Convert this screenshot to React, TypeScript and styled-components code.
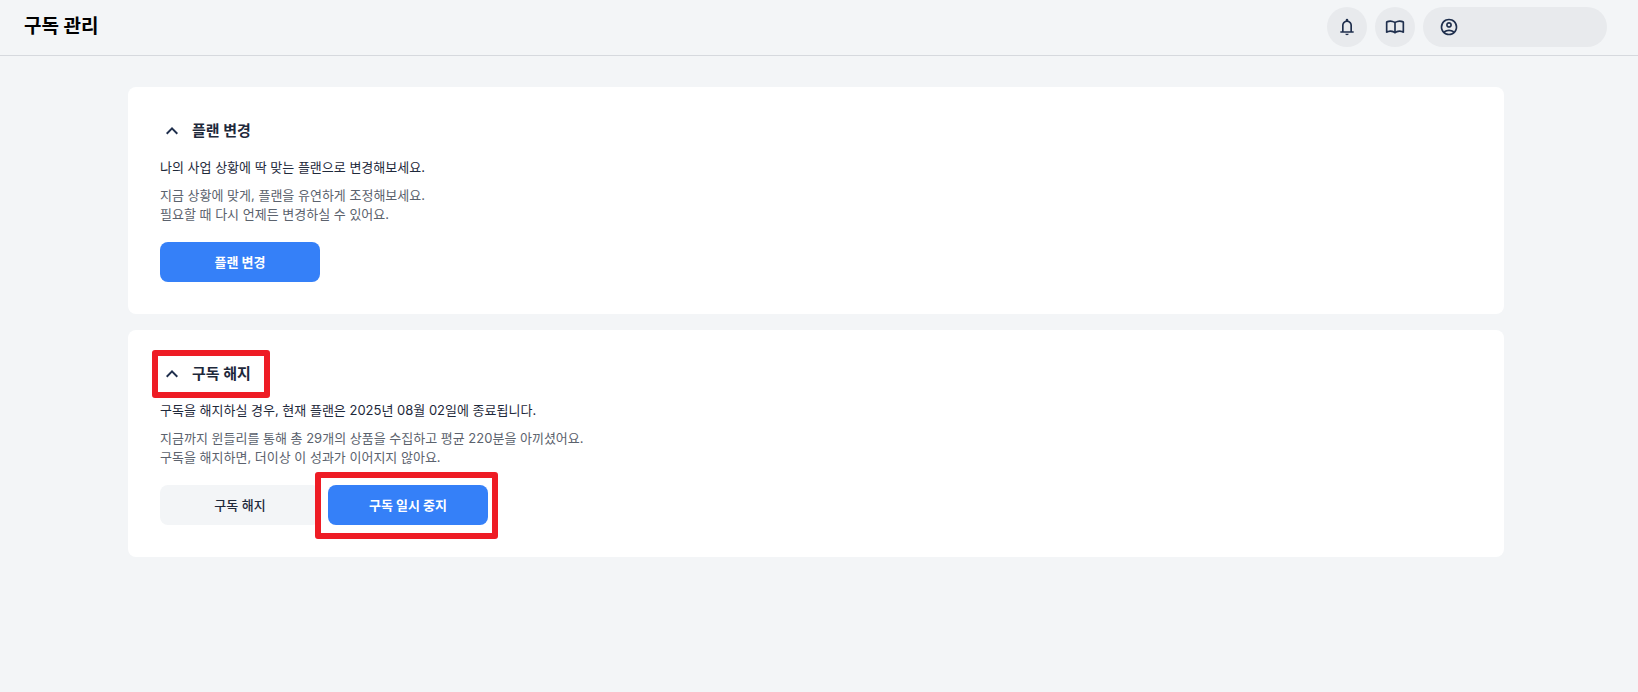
import React, { useState } from "react";
import styled, { createGlobalStyle, css } from "styled-components";

const GlobalStyle = createGlobalStyle`
  *, *::before, *::after { box-sizing: border-box; }
  body {
    margin: 0;
    background: #f3f5f7;
    color: #1e293b;
    font-family: Inter, "Noto Sans CJK KR", sans-serif;
    font-size: 13px;
    line-height: 19px;
  }
  button { font: inherit; color: inherit; cursor: pointer; }
`;

const Header = styled.header`
  display: flex;
  align-items: center;
  justify-content: space-between;
  height: 56px;
  padding: 0 31px 2px 24px;
  border-bottom: 1px solid #d6d9de;
`;

const PageTitle = styled.h1`
  margin: 0;
  color: #000;
  font-size: 19px;
  line-height: 24px;
  font-weight: 700;
`;

const HeaderActions = styled.nav`
  display: flex;
  gap: 8px;
`;

const HeaderButton = styled.button<{ $wide?: boolean }>`
  display: flex;
  align-items: center;
  justify-content: ${(p) => (p.$wide ? "flex-start" : "center")};
  width: ${(p) => (p.$wide ? "184px" : "40px")};
  height: 40px;
  padding: 0 ${(p) => (p.$wide ? "16px" : "0")};
  border: 0;
  border-radius: 20px;
  background: #e8eaed;
`;

const Icon = styled.svg<{ $size: number }>`
  display: block;
  flex: none;
  width: ${(p) => p.$size}px;
  height: ${(p) => p.$size}px;
  fill: #1f2f4d;
`;

const Content = styled.main`
  display: flex;
  flex-direction: column;
  gap: 16px;
  padding: 31px 134px 31px 128px;
`;

const Card = styled.section`
  padding: 32px;
  border-radius: 8px;
  background: #fff;
`;

const CardHeading = styled.h2`
  display: flex;
  margin: 0;
  font-size: 15px;
  line-height: 24px;
  font-weight: 700;
`;

const Toggle = styled.button`
  display: flex;
  align-items: center;
  gap: 8px;
  height: 24px;
  padding: 0;
  border: 0;
  background: none;
`;

const Chevron = styled(Icon)<{ $open: boolean }>`
  ${(p) => !p.$open && css`transform: rotate(180deg);`}
`;

const Lead = styled.p`
  margin: 15px 0 9px;
`;

const Description = styled.p`
  margin: 0;
  color: #5b626d;
`;

const Actions = styled.div`
  display: flex;
  gap: 8px;
  margin-top: 18px;
`;

const ActionButton = styled.button<{ $primary?: boolean }>`
  width: 160px;
  height: 40px;
  padding: 0;
  border: 0;
  border-radius: 8px;
  background: ${(p) => (p.$primary ? "#3580f8" : "#f3f5f7")};
  color: ${(p) => (p.$primary ? "#fff" : "#1e293b")};
  font-weight: ${(p) => (p.$primary ? 700 : 500)};
`;

const Marked = styled.span<{ $inset: string }>`
  position: relative;
  display: flex;

  &::after {
    content: "";
    position: absolute;
    inset: ${(p) => p.$inset};
    border: 6px solid #ee1c25;
    border-radius: 3px;
    pointer-events: none;
  }
`;

const paths = {
  bell: "M160-200v-80h80v-280q0-83 50-147.5T420-792v-28q0-25 17.5-42.5T480-880q25 0 42.5 17.5T540-820v28q80 20 130 84.5T720-560v280h80v80H160Zm320-300Zm0 420q-33 0-56.5-23.5T400-160h160q0 33-23.5 56.5T480-80ZM320-280h320v-280q0-66-47-113t-113-47q-66 0-113 47t-47 113v280Z",
  book: "M260-320q47 0 91.5 10.5T440-278v-394q-41-24-87-36t-93-12q-36 0-71.5 7T120-692v396q35-12 69.5-18t70.5-6Zm260 42q44-21 88.5-31.5T700-320q36 0 70.5 6t69.5 18v-396q-33-14-68.5-21t-71.5-7q-47 0-93 12t-87 36v394Zm-40 118q-48-38-104-59t-116-21q-42 0-82.5 11T100-198q-21 11-40.5-1T40-234v-482q0-11 5.5-21T62-752q46-24 96-36t102-12q58 0 113.5 15T480-740q51-30 106.5-45T700-800q52 0 102 12t96 36q11 5 16.5 15t5.5 21v482q0 23-19.5 35t-40.5 1q-37-20-77.5-31T700-240q-60 0-116 21t-104 59Z",
  account:
    "M234-276q51-39 114-61.5T480-360q69 0 132 22.5T726-276q35-41 54.5-93T800-480q0-133-93.5-226.5T480-800q-133 0-226.5 93.5T160-480q0 59 19.5 111t54.5 93Zm246-164q-59 0-99.5-40.5T340-580q0-59 40.5-99.5T480-720q59 0 99.5 40.5T620-580q0 59-40.5 99.5T480-440Zm0 360q-83 0-156-31.5T197-197q-54-54-85.5-127T80-480q0-83 31.5-156T197-763q54-54 127-85.5T480-880q83 0 156 31.5T763-763q54 54 85.5 127T880-480q0 83-31.5 156T763-197q-54 54-127 85.5T480-80Zm0-80q53 0 100-15.5t86-44.5q-39-29-86-44.5T480-280q-53 0-100 15.5T294-220q39 29 86 44.5T480-160Zm0-360q26 0 43-17t17-43q0-26-17-43t-43-17q-26 0-43 17t-17 43q0 26 17 43t43 17Z",
  chevron: "M480-528 296-344l-56-56 240-240 240 240-56 56-184-184Z",
};

function HeaderIcon({ name }: { name: "bell" | "book" | "account" }) {
  return (
    <Icon $size={20} viewBox="0 -960 960 960" aria-hidden="true">
      <path d={paths[name]} />
    </Icon>
  );
}

interface PlanSectionProps {
  title: string;
  lead: string;
  lines: [string, string];
  marked?: boolean;
  children: React.ReactNode;
}

function PlanSection({ title, lead, lines, marked, children }: PlanSectionProps) {
  const [open, setOpen] = useState(true);
  const toggle = (
    <Toggle type="button" aria-expanded={open} onClick={() => setOpen(!open)}>
      <Chevron $size={24} $open={open} viewBox="0 -960 960 960" aria-hidden="true">
        <path d={paths.chevron} />
      </Chevron>
      {title}
    </Toggle>
  );
  return (
    <Card>
      <CardHeading>
        {marked ? <Marked $inset="-12px -19px -12px -8px">{toggle}</Marked> : toggle}
      </CardHeading>
      {open && (
        <>
          <Lead>{lead}</Lead>
          <Description>
            {lines[0]}
            <br />
            {lines[1]}
          </Description>
          <Actions>{children}</Actions>
        </>
      )}
    </Card>
  );
}

export default function App() {
  return (
    <>
      <GlobalStyle />
      <Header>
        <PageTitle>구독 관리</PageTitle>
        <HeaderActions>
          <HeaderButton type="button" aria-label="알림">
            <HeaderIcon name="bell" />
          </HeaderButton>
          <HeaderButton type="button" aria-label="가이드">
            <HeaderIcon name="book" />
          </HeaderButton>
          <HeaderButton type="button" $wide aria-label="내 계정">
            <HeaderIcon name="account" />
          </HeaderButton>
        </HeaderActions>
      </Header>
      <Content>
        <PlanSection
          title="플랜 변경"
          lead="나의 사업 상황에 딱 맞는 플랜으로 변경해보세요."
          lines={[
            "지금 상황에 맞게, 플랜을 유연하게 조정해보세요.",
            "필요할 때 다시 언제든 변경하실 수 있어요.",
          ]}
        >
          <ActionButton type="button" $primary>
            플랜 변경
          </ActionButton>
        </PlanSection>
        <PlanSection
          title="구독 해지"
          lead="구독을 해지하실 경우, 현재 플랜은 2025년 08월 02일에 종료됩니다."
          lines={[
            "지금까지 윈들리를 통해 총 29개의 상품을 수집하고 평균 220분을 아끼셨어요.",
            "구독을 해지하면, 더이상 이 성과가 이어지지 않아요.",
          ]}
          marked
        >
          <ActionButton type="button">구독 해지</ActionButton>
          <Marked $inset="-13px -10px -14px -13px">
            <ActionButton type="button" $primary>
              구독 일시 중지
            </ActionButton>
          </Marked>
        </PlanSection>
      </Content>
    </>
  );
}
